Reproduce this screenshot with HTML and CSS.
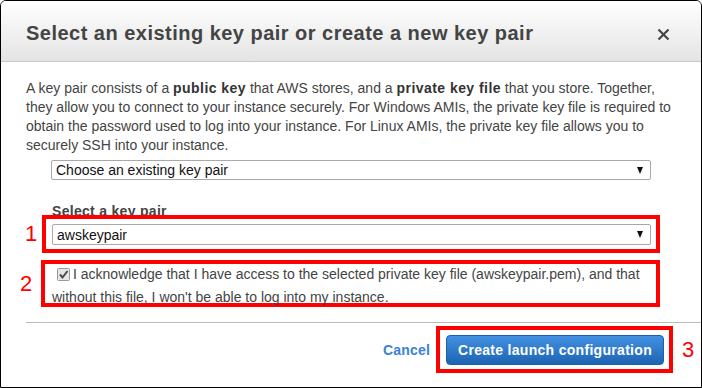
FILE: index.html
```html
<!DOCTYPE html>
<html>
<head>
<meta charset="utf-8">
<link rel="stylesheet" href="styles.css">
</head>
<body>
<div class="modal">
  <header class="hd">
    <h1 class="title">Select an existing key pair or create a new key pair</h1>
    <span class="close"><svg width="13" height="13" viewBox="0 0 13 13"><path d="M1.5 1.5 L11.5 11.5 M11.5 1.5 L1.5 11.5" stroke="#444" stroke-width="2.2" fill="none"/></svg></span>
  </header>
  <div class="bd">
    <p class="intro">A key pair consists of a <b>public key</b> that AWS stores, and a <b>private key file</b> that you store. Together, they allow you to connect to your instance securely. For Windows AMIs, the private key file is required to obtain the password used to log into your instance. For Linux AMIs, the private key file allows you to securely SSH into your instance.</p>
    <div class="sel sel-top"><span>Choose an existing key pair</span><span class="caret"></span></div>
    <div class="label">Select a key pair</div>
    <div class="row row1">
      <span class="num n1">1</span>
      <div class="mark m1">
        <div class="sel"><span>awskeypair</span><span class="caret"></span></div>
      </div>
    </div>
    <div class="row row2">
      <span class="num n2">2</span>
      <div class="mark m2">
        <span class="cb"><svg width="13" height="13" viewBox="0 0 13 13"><rect x="0.5" y="0.5" width="12" height="12" rx="1" fill="#e6e6e6" stroke="#9a9a9a"/><path d="M3 6.5 L5.5 9.5 L10.5 3" stroke="#4a4a4a" stroke-width="2" fill="none"/></svg></span>I acknowledge that I have access to the selected private key file (awskeypair.pem), and that without this file, I won't be able to log into my instance.
      </div>
    </div>
  </div>
  <div class="ft">
    <a class="cancel">Cancel</a>
    <div class="mark m3"><button class="btn">Create launch configuration</button></div>
    <span class="num n3">3</span>
  </div>
</div>
</body>
</html>
```
FILE: styles.css
```css
html, body { margin: 0; padding: 0; background: #fff; }
body { font-family: "Liberation Sans", Arial, sans-serif; }
.modal {
  width: 702px;
  height: 388px;
  box-sizing: border-box;
  border: 1px solid #000;
  border-radius: 6px 6px 0 0;
  overflow: hidden;
  background: #fff;
}
.hd {
  height: 61px;
  box-sizing: border-box;
  border-bottom: 1px solid #c8c8c8;
  background: linear-gradient(#ffffff, #e4e4e4);
  display: flex;
  align-items: center;
  justify-content: space-between;
  padding: 4px 31px 0 25px;
}
.title {
  margin: 0;
  font-size: 20px;
  font-weight: bold;
  color: #444;
  letter-spacing: 0.48px;
}
.close { display: flex; padding-top: 2px; }
.bd { padding: 17px 25px 0 25px; }
.intro {
  margin: 0;
  font-size: 14px;
  line-height: 19px;
  color: #444;
}
.intro b { color: #333; letter-spacing: 0.45px; }
.sel {
  height: 20px;
  box-sizing: border-box;
  border: 1px solid #a9a9a9;
  border-radius: 2px;
  display: flex;
  align-items: center;
  justify-content: space-between;
  padding: 0 7px 0 4px;
  font-size: 14px;
  color: #111;
  background: #fff;
}
.sel-top { margin: 5px 0 0 25px; width: 600px; }
.caret {
  width: 0; height: 0;
  border-left: 3.5px solid transparent;
  border-right: 3.5px solid transparent;
  border-top: 7px solid #111;
}
.label {
  margin: 23px 0 0 26px;
  font-size: 14px;
  line-height: 16px;
  font-weight: bold;
  color: #444;
  letter-spacing: 0.3px;
}
.row { display: flex; align-items: center; }
.num { color: #f00; font-size: 22px; line-height: 22px; }
.row1 { margin: -4px 0 0 -1px; }
.n1 { width: 17px; }
.row2 { margin: 7px 0 0 -6px; }
.n2 { width: 21px; }
.mark { border: 4px solid #f00; box-sizing: border-box; }
.m1 { width: 618px; height: 38px; padding: 5px 5px 0 6px; }
.m1 .sel { height: 21px; }
.m2 {
  width: 619px; height: 47px; padding: 0 7px 0 7px;
  font-size: 14px; line-height: 21px; color: #444;
}
.cb { display: inline-block; vertical-align: -2px; margin: 0 3px 0 5px; }
.ft {
  margin: 15px 0 0 25px;
  border-top: 1px solid #bbb;
  display: flex;
  align-items: center;
  justify-content: flex-end;
  padding: 3px 5px 0 0;
}
.cancel {
  color: #3a82d6;
  font-weight: bold;
  font-size: 14px;
  margin-right: 6px;
  letter-spacing: 0.2px;
}
.m3 { width: 237px; height: 47px; padding: 5px 5px 0 6px; margin-right: 9px; }
.btn {
  width: 218px; height: 30px;
  border: 1px solid #1b5fa9;
  border-radius: 4px;
  background: linear-gradient(#4391e2, #1d64b3);
  color: #fff;
  font-family: "Liberation Sans", Arial, sans-serif;
  font-weight: bold;
  font-size: 14px;
  letter-spacing: 0.3px;
  padding: 0;
}
.n3 { width: 14px; }
```
